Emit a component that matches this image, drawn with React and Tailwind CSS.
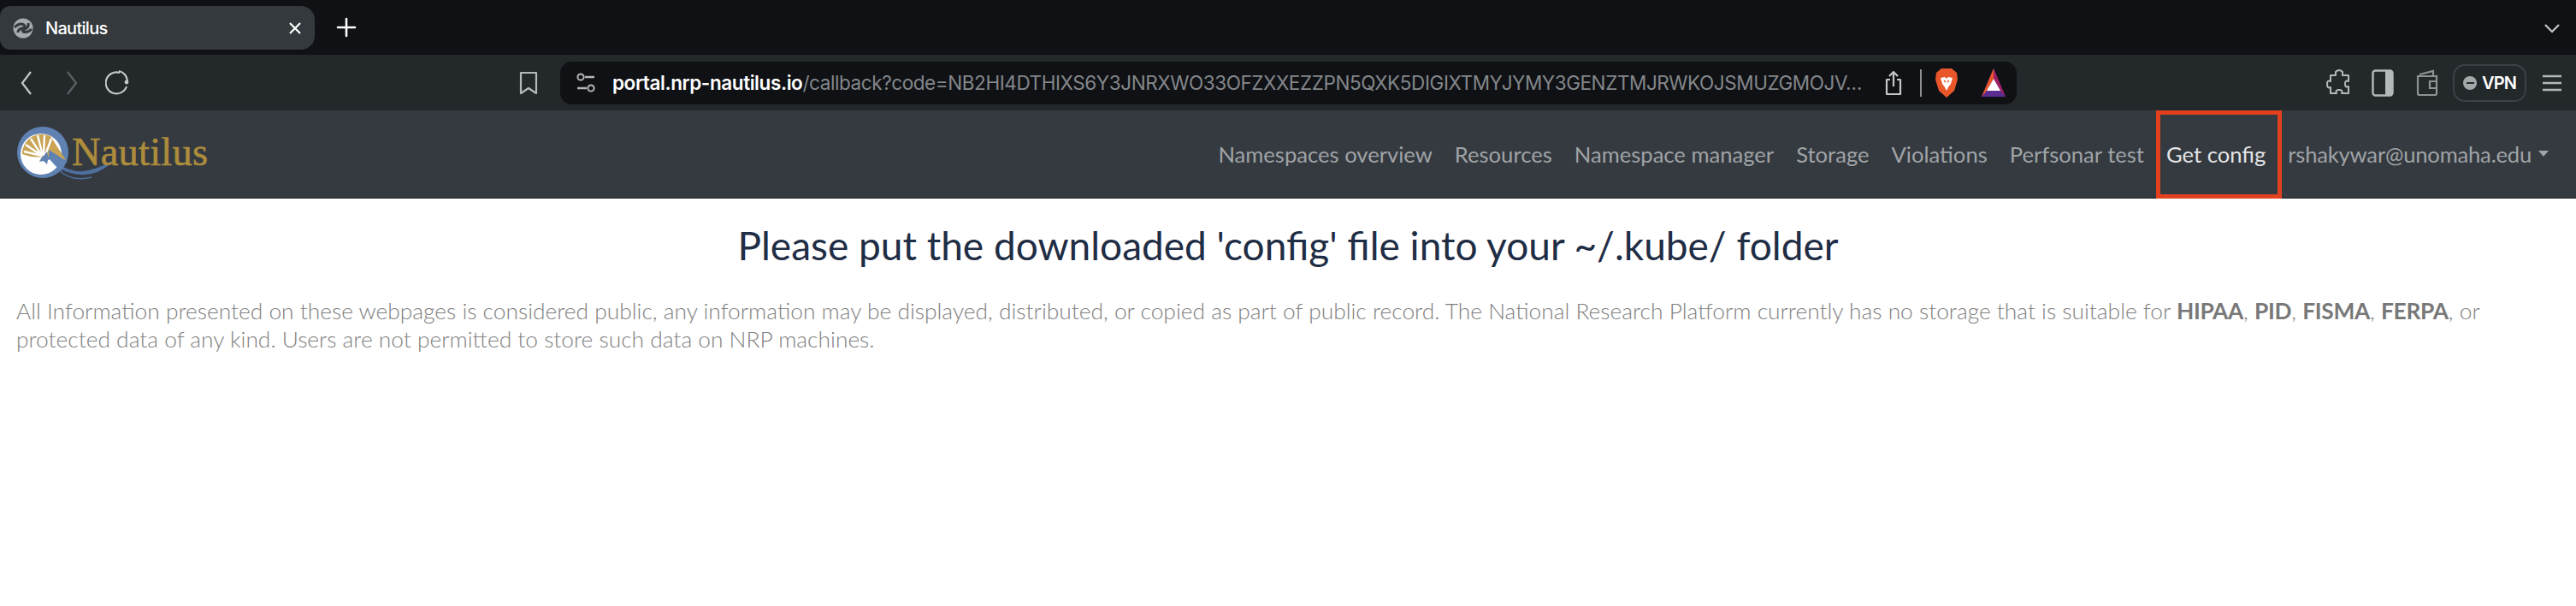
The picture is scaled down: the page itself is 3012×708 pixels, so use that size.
import React from "react";

const sans = "font-['Inter','Liberation_Sans',sans-serif]";
const lato = "font-['Lato','Open_Sans',sans-serif]";

function Logo() {
  return (
    <div className="flex items-center">
      <svg width="66" height="66" viewBox="0 0 66 66" className="shrink-0 overflow-visible">
        <path d="M52 46 Q70 58 92 50 Q104 46 114 40 Q104 52 88 56 Q70 60 50 50 Z" fill="#4f6f9f" />
        <path d="M50 52 Q66 66 88 60" stroke="#4f6f9f" strokeWidth="1.6" fill="none" />
        <circle cx="31" cy="31" r="30" fill="#5f82b3" />
        <circle cx="29" cy="33" r="24" fill="#ffffff" />
        <path d="M7 33 A23 23 0 0 1 40 12 L58 40 L34 36 Q20 38 7 33 Z" fill="#c9a455" />
        <path d="M9 30 L30 35 M11 22 L30 35 M17 15 L30 35 M25 11 L31 35 M33 11 L32 35 M41 15 L34 34" stroke="#fff" strokeWidth="2.4" fill="none" />
        <path d="M32 35 L36 30 L37 36 L42 38 L37 40 L36 45 L32 41 L27 42 L29 38 Z" fill="#5f82b3" />
        <path d="M38 28 L60 42 L47 48 L38 38 Z" fill="#5f82b3" />
      </svg>
      <span className="font-['Liberation_Serif',serif] text-[46.5px] leading-none text-[#ad8c3c] -ml-[1px] -mt-[4px] tracking-[0.2px] [-webkit-text-stroke:0.6px_#ad8c3c]">Nautilus</span>
    </div>
  );
}

function NavLink({ children, active }) {
  return (
    <a className={`px-[13px] whitespace-nowrap ${active ? "text-[#e4e5e6]" : "text-[#a0a3a6]"}`}>{children}</a>
  );
}

export default function App() {
  return (
    <div className={`min-h-[708px] w-full bg-white ${sans}`}>
      {/* tab strip */}
      <div className="h-[64px] bg-[#0f1115] flex items-start pt-[7px]">
        <div className="w-[368px] h-[51px] bg-[#33393c] rounded-r-[16px] rounded-l-[12px] flex items-center pl-[15px] pr-[15px]">
          <svg width="24" height="24" viewBox="0 0 24 24">
            <circle cx="12" cy="12" r="11.5" fill="#a7abad" />
            <path d="M2 11 Q8 5 13 8 Q16 11 11 12 Q6 13 6 17 M22 13 Q17 18 12 16 Q10 14 14 13 Q19 11 18 6" stroke="#33393c" strokeWidth="3" fill="none" />
          </svg>
          <span className="ml-[14px] text-[20px] tracking-[-0.7px] text-white font-medium">Nautilus</span>
          <svg width="16" height="16" viewBox="0 0 16 16" className="ml-auto">
            <path d="M2 2 L14 14 M14 2 L2 14" stroke="#fff" strokeWidth="2.2" />
          </svg>
        </div>
        <svg width="24" height="24" viewBox="0 0 24 24" className="ml-[25px] mt-[13px]">
          <path d="M12 2 V22 M2 12 H22" stroke="#fff" strokeWidth="2.6" strokeLinecap="round" />
        </svg>
        <svg width="20" height="12" viewBox="0 0 20 12" className="ml-auto mr-[18px] mt-[20px]">
          <path d="M2 2 L10 10 L18 2" stroke="#c5c7c9" strokeWidth="2.2" fill="none" />
        </svg>
      </div>

      {/* toolbar */}
      <div className="h-[65px] bg-[#23282b] flex items-center">
        <svg width="16" height="32" viewBox="0 0 16 32" className="ml-[23px]"><path d="M13 3 L3 16 L13 29" stroke="#c5c8ca" strokeWidth="2.2" fill="none" /></svg>
        <svg width="16" height="32" viewBox="0 0 16 32" className="ml-[37px]"><path d="M3 3 L13 16 L3 29" stroke="#5d6265" strokeWidth="2.2" fill="none" /></svg>
        <svg width="28" height="32" viewBox="0 0 28 32" className="ml-[31px]">
          <path d="M17 4 A12.5 12.5 0 1 0 25 20" stroke="#c5c8ca" strokeWidth="2.2" fill="none" />
          <path d="M16 2 A12.5 12.5 0 0 1 26 14" stroke="#c5c8ca" strokeWidth="2.2" fill="none" />
          <circle cx="25" cy="15" r="2.4" fill="#c5c8ca" />
        </svg>
        <svg width="22" height="28" viewBox="0 0 22 28" className="ml-[456px]">
          <path d="M2 2 H20 V26 L11 20 L2 26 Z" stroke="#b5b8ba" strokeWidth="2.2" fill="none" strokeLinejoin="round" />
        </svg>
        {/* address bar */}
        <div className="ml-[26px] w-[1703px] h-[50px] bg-[#0f1115] rounded-[14px] flex items-center pl-[18px] pr-[12px]">
          <svg width="24" height="28" viewBox="0 0 24 28">
            <circle cx="6" cy="7" r="3.6" stroke="#b5b8ba" strokeWidth="2" fill="none" />
            <path d="M11 7 H22 M2 20 H13" stroke="#b5b8ba" strokeWidth="2.4" />
            <circle cx="18" cy="20" r="3.6" stroke="#b5b8ba" strokeWidth="2" fill="none" />
          </svg>
          <span className="ml-[19px] text-[22.5px] tracking-[-0.42px] whitespace-nowrap">
            <span className="text-white font-semibold">portal.nrp-nautilus.io</span>
            <span className="text-[#84878a]">/callback?code=NB2HI4DTHIXS6Y3JNRXWO33OFZXXEZZPN5QXK5DIGIXTMYJYMY3GENZTMJRWKOJSMUZGMOJV…</span>
          </span>
          <svg width="22" height="32" viewBox="0 0 22 32" className="ml-auto">
            <path d="M7 12 H3 V29 H19 V12 H15 M11 20 V3 M6 8 L11 3 L16 8" stroke="#c5c8ca" strokeWidth="2.2" fill="none" strokeLinejoin="round" />
          </svg>
          <div className="ml-[20px] w-[2px] h-[32px] bg-[#8d9092]" />
          <svg width="28" height="36" viewBox="0 0 28 36" className="ml-[15px]">
            <path d="M8 1 H20 L26 6 L27 14 L23 27 L14 35 L5 27 L1 14 L2 6 Z" fill="#e8562a" />
            <path d="M7 12 L12 11 L14 13 L16 11 L21 12 L19 19 L16 23 L14 27 L12 23 L9 19 Z" fill="#fff" />
            <path d="M11 15 L13 17 M17 15 L15 17" stroke="#e8562a" strokeWidth="1.5" />
          </svg>
          <svg width="30" height="36" viewBox="0 0 30 36" className="ml-[26px]">
            <path d="M15 1 L29 34 H1 Z" fill="#5c2d91" />
            <path d="M15 1 L1 34 L7 27 L15 13 Z" fill="#e8562a" />
            <path d="M15 1 L29 34 L23 27 L15 13 Z" fill="#9e1f63" />
            <path d="M15 13 L23 27 H7 Z" fill="#fff" />
          </svg>
        </div>
        <svg width="30" height="34" viewBox="0 0 30 34" className="ml-auto">
          <path d="M11 4 Q15 0 19 4 L19 8 L26 8 L26 15 Q22 13 22 18 Q22 23 26 21 L26 29 L18 29 Q20 25 15 25 Q10 25 12 29 L5 29 L5 22 Q1 24 1 18 Q1 13 5 15 L5 8 L11 8 Z" stroke="#b5b8ba" strokeWidth="2" fill="none" strokeLinejoin="round" />
        </svg>
        <svg width="26" height="32" viewBox="0 0 26 32" className="ml-[23px]">
          <rect x="1.5" y="1.5" width="23" height="29" rx="3" stroke="#b5b8ba" strokeWidth="2.4" fill="none" />
          <rect x="16" y="2" width="8" height="28" fill="#b5b8ba" />
        </svg>
        <svg width="26" height="32" viewBox="0 0 26 32" className="ml-[26px]">
          <path d="M4 6 L20 2 V7 M2 8 H24 V28 Q24 30 22 30 H4 Q2 30 2 28 Z" stroke="#8d9295" strokeWidth="2.2" fill="none" />
          <path d="M24 14 H16 V22 H24" stroke="#8d9295" strokeWidth="2.2" fill="none" />
        </svg>
        <div className="ml-[17px] w-[86px] h-[44px] rounded-[14px] border-2 border-[#3b4144] flex items-center pl-[10px]">
          <div className="w-[16px] h-[16px] rounded-full bg-[#a3a8ab] flex items-center justify-center">
            <div className="w-[9px] h-[2px] bg-[#23282b]" />
          </div>
          <span className="ml-[6px] text-[20px] tracking-[-0.8px] text-white font-semibold">VPN</span>
        </div>
        <svg width="24" height="24" viewBox="0 0 24 24" className="ml-[18px] mr-[16px]">
          <path d="M1 4 H23 M1 12 H23 M1 20 H23" stroke="#b5b8ba" strokeWidth="2.6" />
        </svg>
      </div>

      {/* site navbar */}
      <nav className={`relative h-[103px] bg-[#343a40] flex items-center justify-between pl-[19px] pr-[32px] border-b border-[#1d2124] ${lato}`}>
        <Logo />
        <div className="flex items-center text-[25.6px] font-normal">
          <NavLink>Namespaces overview</NavLink>
          <NavLink>Resources</NavLink>
          <NavLink>Namespace manager</NavLink>
          <NavLink>Storage</NavLink>
          <NavLink>Violations</NavLink>
          <NavLink>Perfsonar test</NavLink>
          <span className="relative">
            <NavLink active>Get config</NavLink>
            <span className="absolute left-[1px] right-[-6px] -top-[32px] -bottom-[33px] border-[5px] border-[#e3401f]" />
          </span>
          <a className="pl-[13px] whitespace-nowrap text-[#a0a3a6] flex items-center tracking-[-0.2px]">
            rshakywar@unomaha.edu
            <span className="ml-[8px] w-0 h-0 border-x-[6px] border-x-transparent border-t-[7px] border-t-[#a0a3a6]" />
          </a>
        </div>
      </nav>

      {/* content */}
      <main className={`px-[19px] ${lato}`}>
        <h1 className="text-center text-[46px] leading-[55px] text-[#1f2d45] font-normal mt-[27px]">
          Please put the downloaded 'config' file into your ~/.kube/ folder
        </h1>
        <p className="mt-[33px] text-[26.35px] leading-[33px] text-[#808080] font-light">
          All Information presented on these webpages is considered public, any information may be displayed, distributed, or copied as part of public record. The National Research Platform currently has no storage that is suitable for{" "}
          <b className="font-bold text-[#787878] tracking-[-0.3px]">HIPAA</b>, <b className="font-bold text-[#787878] tracking-[-0.3px]">PID</b>, <b className="font-bold text-[#787878] tracking-[-0.3px]">FISMA</b>, <b className="font-bold text-[#787878] tracking-[-0.3px]">FERPA</b>, or protected data of any kind. Users are not permitted to store such data on NRP machines.
        </p>
      </main>
    </div>
  );
}
